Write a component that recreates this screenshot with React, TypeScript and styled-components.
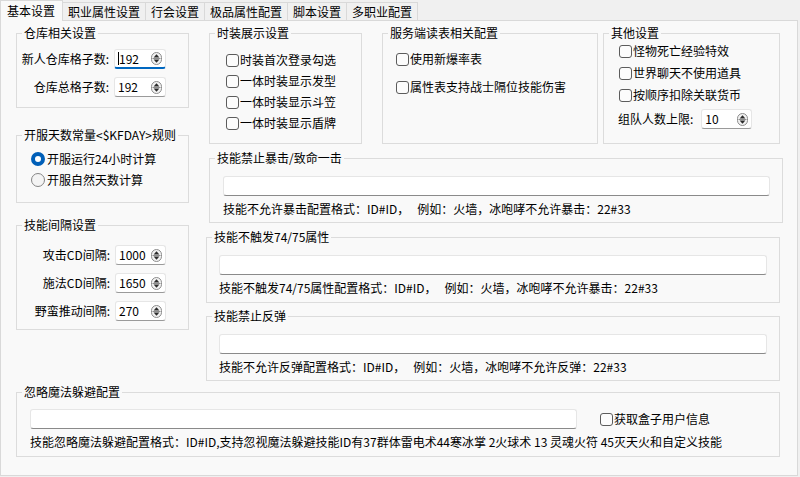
import { Fragment } from "react";
import styled, { createGlobalStyle } from "styled-components";

const GlobalStyle = createGlobalStyle`
  body {
    margin: 0;
    background-color: #f0f0f0;
    font-family: "Noto Sans CJK SC", "Noto Sans", sans-serif;
    font-size: 12px;
    color: #000;
  }
`;

const Window = styled.div`
  width: 800px;
  height: 477px;
  overflow: hidden;
`;

const TabBar = styled.div`
  display: flex;
  align-items: flex-end;
  height: 20px;
`;

const Tab = styled.div<{ $active?: boolean }>`
  box-sizing: border-box;
  display: flex;
  align-items: center;
  position: relative;
  z-index: ${(p) => (p.$active ? 1 : 0)};
  height: ${(p) => (p.$active ? "21px" : "18px")};
  margin-bottom: ${(p) => (p.$active ? "-1px" : "0")};
  padding: ${(p) => (p.$active ? "0 7px 0 6px" : "0 5px")};
  background-color: ${(p) => (p.$active ? "#f9f9f9" : "#f0f0f0")};
  border: 1px solid #d9d9d9;
  border-bottom: none;
  border-left: ${(p) => (p.$active ? "1px solid #d9d9d9" : "none")};
  font-size: 12px;
  line-height: 16px;
  white-space: nowrap;
`;

const Panel = styled.div`
  box-sizing: border-box;
  display: flex;
  flex-direction: column;
  width: 798px;
  height: 456px;
  padding: 4px 0 0 15px;
  background-color: #f9f9f9;
  border: 1px solid #d9d9d9;
`;

const TopArea = styled.div`
  display: flex;
  flex-direction: row;
  align-items: flex-start;
  gap: 17px;
`;

const Column = styled.div<{ $width: number }>`
  display: flex;
  flex-direction: column;
  width: ${(p) => p.$width}px;
`;

const Row = styled.div`
  display: flex;
  flex-direction: row;
  align-items: flex-start;
`;

const GroupBox = styled.fieldset<{
  $width: number;
  $height: number;
  $top?: number;
  $left?: number;
}>`
  box-sizing: border-box;
  width: ${(p) => p.$width}px;
  min-width: 0;
  height: ${(p) => p.$height}px;
  margin: ${(p) => p.$top ?? 0}px 0 0 ${(p) => p.$left ?? 0}px;
  padding: 0;
  border: 1px solid #dcdcdc;
`;

const Legend = styled.legend`
  margin-left: 5px;
  padding: 0 2px;
  font-size: 12px;
  line-height: 16px;
  white-space: nowrap;
`;

const Stack = styled.div<{ $pt: number; $pl: number; $gap: number }>`
  display: flex;
  flex-direction: column;
  align-items: flex-start;
  gap: ${(p) => p.$gap}px;
  padding: ${(p) => p.$pt}px 0 0 ${(p) => p.$pl}px;
`;

const FieldGrid = styled.div<{ $labelWidth: number; $pt: number }>`
  display: grid;
  grid-template-columns: ${(p) => p.$labelWidth}px auto;
  column-gap: 5px;
  row-gap: 8px;
  align-items: center;
  justify-content: start;
  padding-top: ${(p) => p.$pt}px;
`;

const FieldLabel = styled.span`
  text-align: right;
  line-height: 16px;
  white-space: nowrap;
`;

const Spin = styled.div<{ $width: number; $focused?: boolean }>`
  box-sizing: border-box;
  display: flex;
  align-items: center;
  width: ${(p) => p.$width}px;
  height: 20px;
  padding: 0 3px 0 3px;
  background-color: #ffffff;
  border: 1px solid #e6e6e6;
  border-bottom: ${(p) => (p.$focused ? "2px solid #0067c0" : "1px solid #9a9a9a")};
  border-radius: 3px;
  font-size: 12px;
  line-height: 16px;
`;

const SpinValue = styled.span`
  flex-grow: 1;
  display: flex;
  align-items: center;
`;

const Caret = styled.span`
  width: 1px;
  height: 13px;
  background-color: #000;
`;

const CheckRow = styled.div`
  display: flex;
  align-items: center;
  gap: 1px;
  height: 16px;
  line-height: 16px;
  white-space: nowrap;
`;

const CheckBox = styled.span`
  box-sizing: border-box;
  flex-shrink: 0;
  width: 13px;
  height: 13px;
  background-color: #fcfcfc;
  border: 1px solid #5c5c5c;
  border-radius: 3px;
`;

const Radio = styled.span<{ $checked?: boolean }>`
  box-sizing: border-box;
  flex-shrink: 0;
  width: 14px;
  height: 14px;
  margin-right: 1px;
  border-radius: 50%;
  background-color: ${(p) => (p.$checked ? "#ffffff" : "#f4f4f4")};
  border: ${(p) => (p.$checked ? "4px solid #005fb8" : "1px solid #858585")};
`;

const InlineField = styled.div`
  display: flex;
  align-items: center;
  gap: 8px;
  margin-left: -1px;
  line-height: 16px;
  white-space: nowrap;
`;

const TextInput = styled.div<{ $width: number }>`
  box-sizing: border-box;
  width: ${(p) => p.$width}px;
  height: 20px;
  background-color: #ffffff;
  border: 1px solid #e6e6e6;
  border-bottom: 1px solid #8a8a8a;
  border-radius: 3px;
`;

const Hint = styled.div`
  line-height: 16px;
  white-space: pre;
`;

const InputRow = styled.div`
  display: flex;
  align-items: center;
  gap: 23px;
`;

function SpinArrows() {
  return (
    <svg width="11" height="13" viewBox="0 0 11 13">
      <rect
        x="0.5"
        y="0.5"
        width="10"
        height="12"
        rx="5"
        fill="#f2f2f2"
        stroke="#8c8c8c"
      />
      <line x1="1.5" y1="6.5" x2="9.5" y2="6.5" stroke="#8c8c8c" />
      <path d="M2.6 5.4 L5.5 2.3 L8.4 5.4 Z" fill="#2b2b2b" />
      <path d="M2.6 7.6 L5.5 10.7 L8.4 7.6 Z" fill="#2b2b2b" />
    </svg>
  );
}

function SpinBox({
  value,
  width,
  focused,
}: {
  value: string;
  width: number;
  focused?: boolean;
}) {
  return (
    <Spin $width={width} $focused={focused}>
      <SpinValue>
        {focused && <Caret />}
        {value}
      </SpinValue>
      <SpinArrows />
    </Spin>
  );
}

function Check({ label }: { label: string }) {
  return (
    <CheckRow>
      <CheckBox />
      {label}
    </CheckRow>
  );
}

const tabs = ["基本设置", "职业属性设置", "行会设置", "极品属性配置", "脚本设置", "多职业配置"];

const ruleBoxes = [
  {
    title: "技能禁止暴击/致命一击",
    hint: "技能不允许暴击配置格式：ID#ID，   例如：火墙，冰咆哮不允许暴击：22#33",
    left: 3,
    top: 6,
    height: 73,
    pl: 13,
    inputWidth: 547,
  },
  {
    title: "技能不触发74/75属性",
    hint: "技能不触发74/75属性配置格式：ID#ID，   例如：火墙，冰咆哮不允许暴击：22#33",
    left: 0,
    top: 6,
    height: 74,
    pl: 12,
    inputWidth: 548,
  },
  {
    title: "技能禁止反弹",
    hint: "技能不允许反弹配置格式：ID#ID，   例如：火墙，冰咆哮不允许反弹：22#33",
    left: 0,
    top: 5,
    height: 73,
    pl: 12,
    inputWidth: 548,
  },
];

export default function App() {
  return (
    <Fragment>
      <GlobalStyle />
      <Window>
        <TabBar>
          {tabs.map((t, i) => (
            <Tab key={t} $active={i === 0}>
              {t}
            </Tab>
          ))}
        </TabBar>
        <Panel>
          <TopArea>
            <Column $width={173}>
              <GroupBox $width={173} $height={83}>
                <Legend>仓库相关设置</Legend>
                <FieldGrid $labelWidth={92} $pt={8}>
                  <FieldLabel>新人仓库格子数:</FieldLabel>
                  <SpinBox value="192" width={52} focused />
                  <FieldLabel>仓库总格子数:</FieldLabel>
                  <SpinBox value="192" width={52} />
                </FieldGrid>
              </GroupBox>

              <GroupBox $width={173} $height={76} $top={19}>
                <Legend>开服天数常量&lt;$KFDAY&gt;规则</Legend>
                <Stack $pt={8} $pl={14} $gap={5}>
                  <CheckRow>
                    <Radio $checked />
                    开服运行24小时计算
                  </CheckRow>
                  <CheckRow>
                    <Radio />
                    开服自然天数计算
                  </CheckRow>
                </Stack>
              </GroupBox>

              <GroupBox $width={173} $height={113} $top={14}>
                <Legend>技能间隔设置</Legend>
                <FieldGrid $labelWidth={93} $pt={12}>
                  <FieldLabel>攻击CD间隔:</FieldLabel>
                  <SpinBox value="1000" width={51} />
                  <FieldLabel>施法CD间隔:</FieldLabel>
                  <SpinBox value="1650" width={51} />
                  <FieldLabel>野蛮推动间隔:</FieldLabel>
                  <SpinBox value="270" width={51} />
                </FieldGrid>
              </GroupBox>
            </Column>

            <Column $width={577}>
              <Row>
                <GroupBox $width={153} $height={119} $left={3}>
                  <Legend>时装展示设置</Legend>
                  <Stack $pt={11} $pl={16} $gap={5}>
                    <Check label="时装首次登录勾选" />
                    <Check label="一体时装显示发型" />
                    <Check label="一体时装显示斗笠" />
                    <Check label="一体时装显示盾牌" />
                  </Stack>
                </GroupBox>
                <GroupBox $width={216} $height={119} $left={20}>
                  <Legend>服务端读表相关配置</Legend>
                  <Stack $pt={10} $pl={13} $gap={12}>
                    <Check label="使用新爆率表" />
                    <Check label="属性表支持战士隔位技能伤害" />
                  </Stack>
                </GroupBox>
                <GroupBox $width={177} $height={119} $left={5}>
                  <Legend>其他设置</Legend>
                  <Stack $pt={2} $pl={15} $gap={6}>
                    <Check label="怪物死亡经验特效" />
                    <Check label="世界聊天不使用道具" />
                    <Check label="按顺序扣除关联货币" />
                    <InlineField>
                      组队人数上限:
                      <SpinBox value="10" width={51} />
                    </InlineField>
                  </Stack>
                </GroupBox>
              </Row>

              {ruleBoxes.map((b) => (
                <GroupBox
                  key={b.title}
                  $width={574}
                  $height={b.height}
                  $top={b.top}
                  $left={b.left}
                >
                  <Legend>{b.title}</Legend>
                  <Stack $pt={10} $pl={b.pl} $gap={5}>
                    <TextInput $width={b.inputWidth} />
                    <Hint>{b.hint}</Hint>
                  </Stack>
                </GroupBox>
              ))}
            </Column>
          </TopArea>

          <GroupBox $width={764} $height={73} $top={3}>
            <Legend>忽略魔法躲避配置</Legend>
            <Stack $pt={9} $pl={13} $gap={5}>
              <InputRow>
                <TextInput $width={547} />
                <Check label="获取盒子用户信息" />
              </InputRow>
              <Hint>
                技能忽略魔法躲避配置格式：ID#ID,支持忽视魔法躲避技能ID有37群体雷电术44寒冰掌 2火球术 13 灵魂火符 45灭天火和自定义技能
              </Hint>
            </Stack>
          </GroupBox>
        </Panel>
      </Window>
    </Fragment>
  );
}
